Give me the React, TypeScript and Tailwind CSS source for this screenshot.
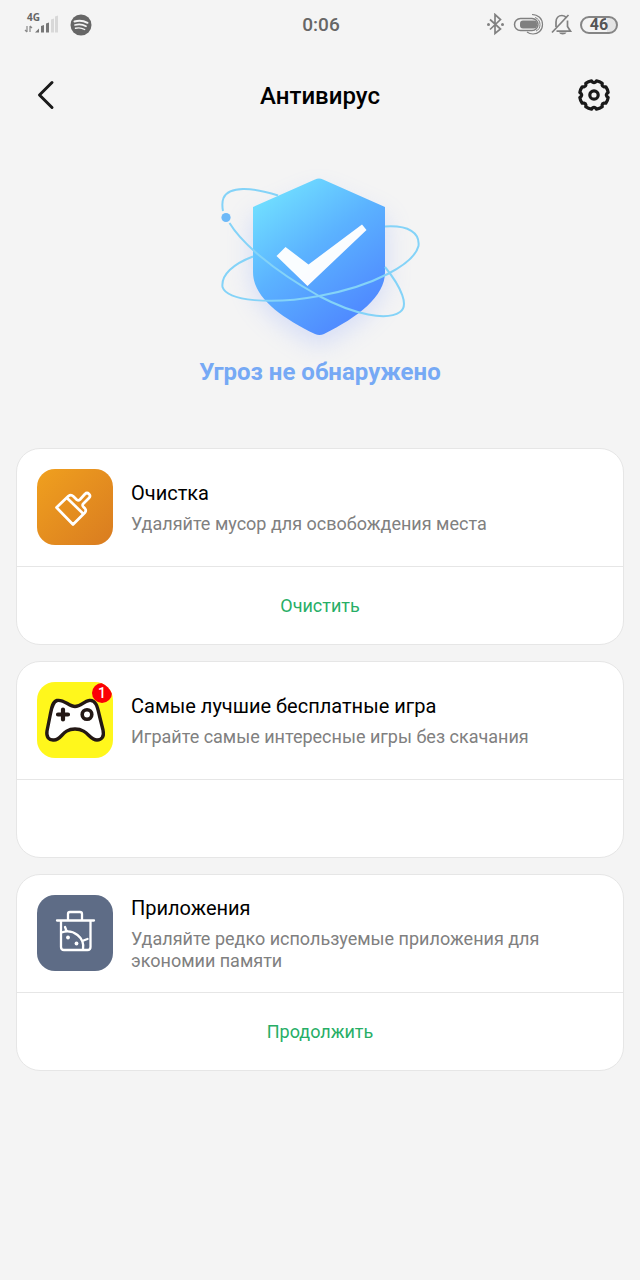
import type { ReactNode } from 'react';

function polar(angle: number, radius: number) {
  const a = (angle * Math.PI) / 180;
  return `${(17 + radius * Math.sin(a)).toFixed(2)} ${(17 - radius * Math.cos(a)).toFixed(2)}`;
}

// Eight teeth with a small rounded notch between each pair
const gearPath =
  [0, 45, 90, 135, 180, 225, 270, 315]
    .map((a, i) => `${i === 0 ? 'M' : 'L'}${polar(a - 10, 14.4)} L${polar(a - 6, 12.8)} Q${polar(a, 11.8)} ${polar(a + 6, 12.8)} L${polar(a + 10, 14.4)} Q${polar(a + 22.5, 14.8)} ${polar(a + 35, 14.4)}`)
    .join(' ') + 'Z';

function SignalIcon() {
  return (
    <svg className="w-9 h-[30px]" viewBox="0 -2 36 30" role="img" aria-label="4G">
      <text x="3" y="9" fontFamily="'Open Sans', sans-serif" fontSize="10" fontWeight="700" fill="#666">4G</text>
      <path d="M3 14v6M3 20l-2-2M6 20v-6M6 14l2 2" fill="none" stroke="#888" strokeWidth="1.2" />
      <path d="M11 20.500l4-4v4z" fill="#777" />
      <path d="M17 14l3-1v7.500h-3zM22 11.500l3-1v10h-3z" fill="#777" />
      <path d="M27 7.500l3-1v14h-3zM31 4.500l3-1v17h-3z" fill="#d8d8d8" />
    </svg>
  );
}

function SpotifyIcon() {
  return (
    <svg className="w-[22px] h-[22px]" viewBox="0 0 22 22" aria-hidden="true">
      <circle cx="11" cy="11" r="10.500" fill="#666" />
      <g fill="none" stroke="#f4f4f4" strokeLinecap="round">
        <path d="M4.500 7.500c4-1.300 9-.9 13 1.300" strokeWidth="2" />
        <path d="M5 11c3.800-1 7.800-.6 11 1.300" strokeWidth="1.700" />
        <path d="M5.500 14.300c3.200-.8 6.400-.4 9.200 1.200" strokeWidth="1.400" />
      </g>
    </svg>
  );
}

function StatusIcons() {
  return (
    <svg className="w-[94px] h-6" viewBox="0 0 94 24" fill="none" stroke="#808080" strokeWidth="1.700" aria-hidden="true">
      <path d="M4 6.500l10.500 9.500L9 20.500v-19L14.500 6.500 4 16.500" />
      <g fill="#808080" stroke="none">
        <circle cx="2.500" cy="11.500" r="1.500" />
        <circle cx="16.500" cy="11.500" r="1.500" />
      </g>
      <rect x="28.500" y="5.500" width="23.500" height="12" rx="6" strokeWidth="1.500" />
      <rect x="34" y="7.500" width="17" height="8" rx="3" fill="#808080" stroke="none" />
      <path d="M46 1.500C52 1.500 56.500 5.500 56.500 11.500S52 21 47 21C44.500 21 42.500 20.200 41 19" strokeWidth="1.200" />
      <path d="M49 4.500c3 1 5 3.500 5 7s-1.500 5.500-4 6.500" strokeWidth="1" />
      <path d="M66 19.500L82.500 2" />
      <path d="M70 14V9C70 5 72.500 2.500 76 2.500C78 2.500 79.500 3.500 80.500 5M81.500 7.500V13.500L84.500 18.200H70.500" />
      <path d="M73 19.500h7.500c-1 2.500-6.500 2.500-7.500 0z" fill="#808080" stroke="none" />
    </svg>
  );
}

function ShieldArt() {
  return (
    <svg className="w-60 h-48 overflow-visible" viewBox="0 0 240 192" aria-hidden="true">
      <defs>
        <linearGradient id="shield" x1="0.150" y1="0.100" x2="0.700" y2="0.950">
          <stop offset="0" stopColor="#6fdcff" />
          <stop offset="0.450" stopColor="#5bb2ff" />
          <stop offset="1" stopColor="#4f89ff" />
        </linearGradient>
        <filter id="glow" x="-40%" y="-40%" width="180%" height="180%">
          <feGaussianBlur stdDeviation="12" />
        </filter>
      </defs>
      <path d="M119 30L187 59v57c0 28-30 51-68 71-38-20-68-43-68-71V59z" fill="#7d9bff" opacity="0.250" filter="url(#glow)" />
      <path d="M115 19.500Q119 17.500 123 19.500L185 47v65c0 25-27 45-61 62q-4.500 2-9 0C80 157 53 137 53 112V47z" fill="url(#shield)" />
      <path d="M76.500 96L85.500 87 108.500 104.500 162 64.500 166.500 70 107.500 126z" fill="#fff" opacity="0.970" />
      <g fill="none" stroke="#84d3f8" strokeWidth="2">
        <path d="M78 35.500C52 27 29 26 23.500 38Q21.500 43 23 51" />
        <path d="M29.500 63C41 82 71 109 119 136C155 155 187 161 200 152C209 146 202 128 185 107" />
        <path d="M185 66.500C209 65 220 73 218.500 86C214 104 174 126 119 136C71 145 27 141 22.500 127C21 115 33 104 53 96.500" />
      </g>
      <circle cx="26" cy="57.500" r="4.600" fill="#6db9f8" />
    </svg>
  );
}

function BrushIcon() {
  return (
    <svg className="w-full h-full" viewBox="0 1.500 76 76" fill="none" stroke="#fff" strokeWidth="2.700" strokeLinejoin="round" aria-hidden="true">
      <path d="M19.500 40L31.500 28.500Q34 26.500 36.500 29L40 32.500Q41.500 33.500 43 32L48 26.500Q50 24.500 52 26.500Q54 28.500 52 30.500L46 36.500Q45 38 46.500 39.500L48 41Q49.500 43 48 45L36 57z" />
      <path d="M30 30.500L46.500 46.500" />
    </svg>
  );
}

function GamepadIcon() {
  return (
    <svg className="w-full h-full" viewBox="0 0 76 76" fill="none" stroke="#231815" strokeWidth="3.400" strokeLinejoin="round" aria-hidden="true">
      <path d="M20 18.500C15 20 14.500 27 13 34L10 49C9 55 12 58.500 17 58C25 58 25 47 38 47C51 47 52 58 60 58C64.500 58 67.500 55 66 48L62.500 34C60.500 25 59 17.500 52 18.500C47 19 44 24.500 38 24.500C32 24.500 27 17 20 18.500z" fill="#fff" />
      <path d="M26 27.500v10M21 32.500h10" strokeWidth="4.200" strokeLinecap="round" />
      <circle cx="50" cy="32.500" r="4.800" strokeWidth="3.600" />
    </svg>
  );
}

function TrashIcon() {
  return (
    <svg className="w-full h-full" viewBox="0 0.500 76 76" fill="none" stroke="#fff" strokeWidth="2.300" strokeLinecap="round" strokeLinejoin="round" aria-hidden="true">
      <path d="M20 26h37M31 25v-5.500q0-2 2-2h10q2 0 2 2V25M24 26v26.500q0 3 3 3h23.500q3 0 3-3V26" />
      <path d="M24.500 38c12-4 23.500 5 21.500 17M29.500 36.500l-1.500-4M46.500 46l4-1.500" />
      <g fill="#fff" stroke="none">
        <circle cx="31" cy="43" r="1.900" />
        <circle cx="39.500" cy="49" r="1.900" />
      </g>
    </svg>
  );
}

const cards: { title: string; desc: string; icon: ReactNode; tile: string; badge?: string; action?: string }[] = [
  {
    title: 'Очистка',
    desc: 'Удаляйте мусор для освобождения места',
    icon: <BrushIcon />,
    tile: 'bg-linear-to-br from-[#f0a01e] to-[#d97c20]',
    action: 'Очистить',
  },
  {
    title: 'Самые лучшие бесплатные игра',
    desc: 'Играйте самые интересные игры без скачания',
    icon: <GamepadIcon />,
    tile: 'bg-[#fff71c]',
    badge: '1',
  },
  {
    title: 'Приложения',
    desc: 'Удаляйте редко используемые приложения для экономии памяти',
    icon: <TrashIcon />,
    tile: 'bg-[#5e6c86]',
    action: 'Продолжить',
  },
];

export default function App() {
  return (
    <div className="min-h-screen bg-[#f4f4f4] font-[Roboto,sans-serif] text-black">
      {/* Status bar */}
      <div className="h-[50px] pl-6 pr-[22px] grid grid-cols-3 items-center text-[#666]">
        <div className="flex items-center gap-2.5">
          <SignalIcon />
          <SpotifyIcon />
        </div>
        <span className="text-center text-[19px] font-medium">0:06</span>
        <div className="flex items-center justify-end">
          <StatusIcons />
          <span className="w-[38px] h-[18px] shrink-0 rounded-full border-2 border-[#858585] bg-linear-to-r from-transparent from-75% to-[#e4e4e4] to-75% flex items-center justify-center text-base font-bold text-[#555]">
            46
          </span>
        </div>
      </div>

      <header className="h-[92px] px-7 flex items-center justify-between">
        <button aria-label="Назад" className="w-9 h-9 flex items-center justify-center">
          <svg className="w-9 h-9" viewBox="0 0 36 36" fill="none" stroke="#1a1a1a" strokeWidth="3" strokeLinecap="round" strokeLinejoin="round">
            <path d="M24 4.500L11.500 17 24 29.500" />
          </svg>
        </button>
        <h1 className="text-2xl font-medium">Антивирус</h1>
        <button aria-label="Настройки" className="w-9 h-9 flex items-center justify-center">
          <svg className="w-[34px] h-[34px]" viewBox="0 1 34 34" fill="none" stroke="#1a1a1a" strokeWidth="3.200" strokeLinejoin="round">
            <path d={gearPath} />
            <circle cx="17" cy="17" r="4.200" />
          </svg>
        </button>
      </header>

      <section className="pt-[18px] flex flex-col items-center">
        <ShieldArt />
        <p className="mt-1 text-2xl font-bold text-[#76a9f5]">Угроз не обнаружено</p>
      </section>

      <main className="mt-15 px-4 pb-8 flex flex-col gap-4">
        {cards.map((card) => (
          <section key={card.title} className="rounded-3xl border border-[#e6e6e6] bg-white">
            <div className="min-h-[117px] px-5 pt-4 pb-[18px] flex items-center gap-[18px]">
              <div className={`relative w-[76px] h-[76px] shrink-0 rounded-[18px] overflow-hidden ${card.tile}`}>
                {card.icon}
                {card.badge && (
                  <span className="absolute top-px right-px w-5 h-5 rounded-full bg-[#fb0007] text-white text-sm font-medium flex items-center justify-center">
                    {card.badge}
                  </span>
                )}
              </div>
              <div className="flex flex-col gap-1.5">
                <h2 className="text-xl leading-7">{card.title}</h2>
                <p className="text-lg leading-[22px] text-[#808080]">{card.desc}</p>
              </div>
            </div>
            <div className="h-[78px] border-t border-[#e6e6e6]">
              {card.action && <button className="w-full h-full text-lg text-[#27ae66]">{card.action}</button>}
            </div>
          </section>
        ))}
      </main>
    </div>
  );
}
